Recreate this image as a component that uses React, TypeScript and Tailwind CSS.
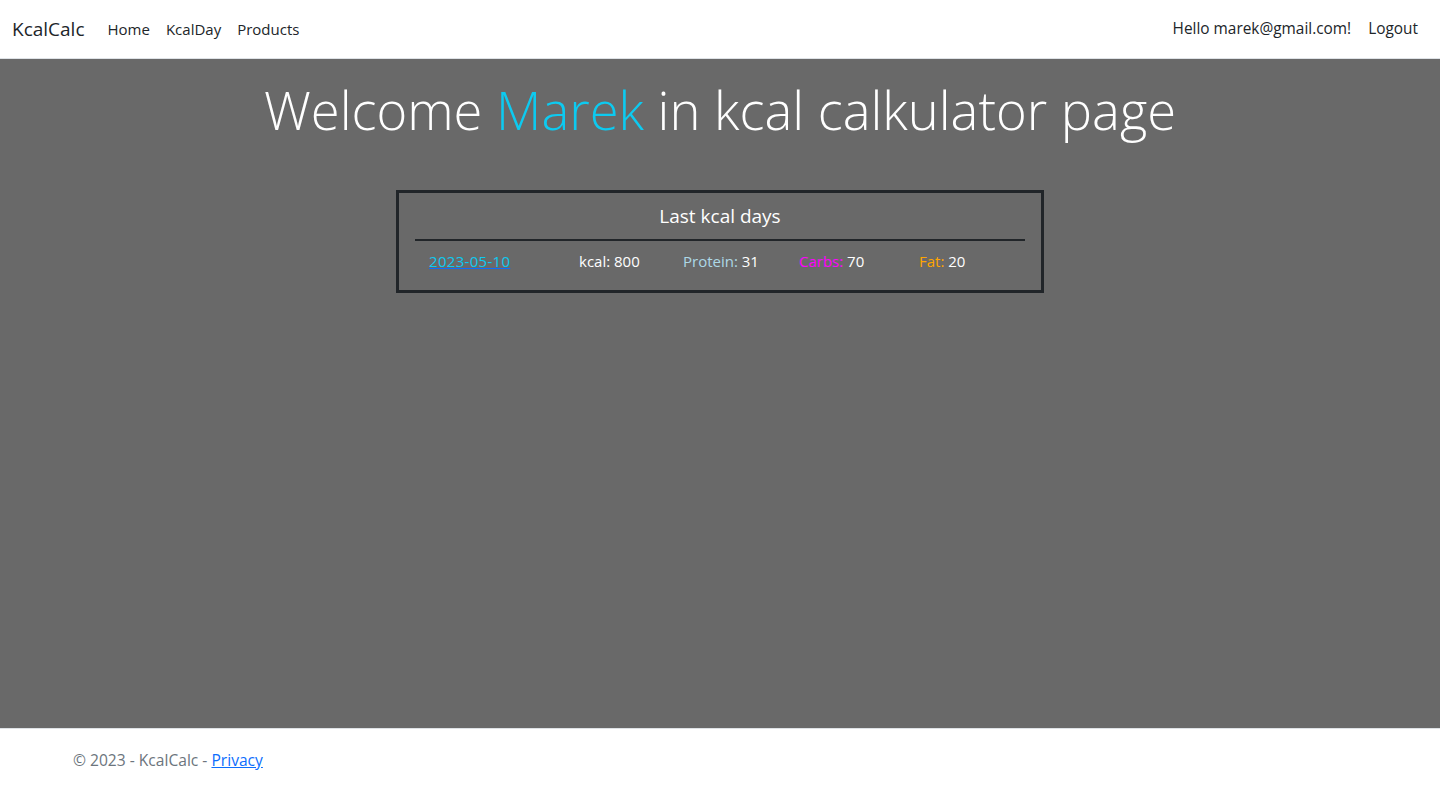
import React from "react";

const font = { fontFamily: '"Open Sans", "Noto Sans", Arial, sans-serif' };

function Navbar() {
  const links = ["Home", "KcalDay", "Products"];
  return (
    <nav className="h-[59px] bg-white border-b border-[#dee2e6] shadow-[0_2px_4px_rgba(0,0,0,0.05)] flex items-center justify-between px-3">
      <div className="flex items-center">
        <span className="text-[19px] text-[#212529] mr-[15px]">KcalCalc</span>
        {links.map((l) => (
          <a key={l} href="#" className="px-2 text-[15px] text-[#212529]">
            {l}
          </a>
        ))}
      </div>
      <div className="flex items-center">
        <span className="text-[15.4px] text-[#212529] pl-2 pr-[9px]">Hello marek@gmail.com!</span>
        <a href="#" className="px-2 text-[15.4px] text-[#212529] mr-[2px]">
          Logout
        </a>
      </div>
    </nav>
  );
}

function LastDays() {
  return (
    <div className="w-[648px] mx-auto border-[3px] border-[#212529] px-4 pt-[10px] pb-[17px]">
      <h5 className="text-center text-white text-[19px] leading-[27px]">Last kcal days</h5>
      <hr className="mt-[9px] border-t-2 border-[#212529]" />
      <div className="flex items-center text-[15px] leading-6 text-white mt-[8px] pl-[14px]">
        <a href="#" className="w-[150px] text-[#0dcaf0] underline decoration-[#0d6efd] tracking-[0.3px]">
          2023-05-10
        </a>
        <span className="w-[104px]">kcal: 800</span>
        <span className="w-[116px]">
          <span className="text-[#add8e6]">Protein:</span> 31
        </span>
        <span className="w-[120px]">
          <span className="text-[#ff00ff]">Carbs:</span> 70
        </span>
        <span>
          <span className="text-[#ffa500]">Fat:</span> 20
        </span>
      </div>
    </div>
  );
}

export default function App() {
  return (
    <div className="min-h-[789px] flex flex-col" style={font}>
      <Navbar />
      <main className="flex-1 bg-[#696969] pt-[18px]">
        <h1 className="text-center text-white font-light text-[52.5px] leading-[66px]">
          Welcome <span className="text-[#0dcaf0]">Marek</span> in kcal calkulator page
        </h1>
        <div className="mt-[47px]">
          <LastDays />
        </div>
      </main>
      <footer className="h-[61px] bg-white border-t border-[#dee2e6] flex items-center pt-[3px] pl-[73px] text-[15.6px] text-[#6c757d]">
        © 2023 - KcalCalc -&nbsp;
        <a href="#" className="text-[#0d6efd] underline">
          Privacy
        </a>
      </footer>
    </div>
  );
}
